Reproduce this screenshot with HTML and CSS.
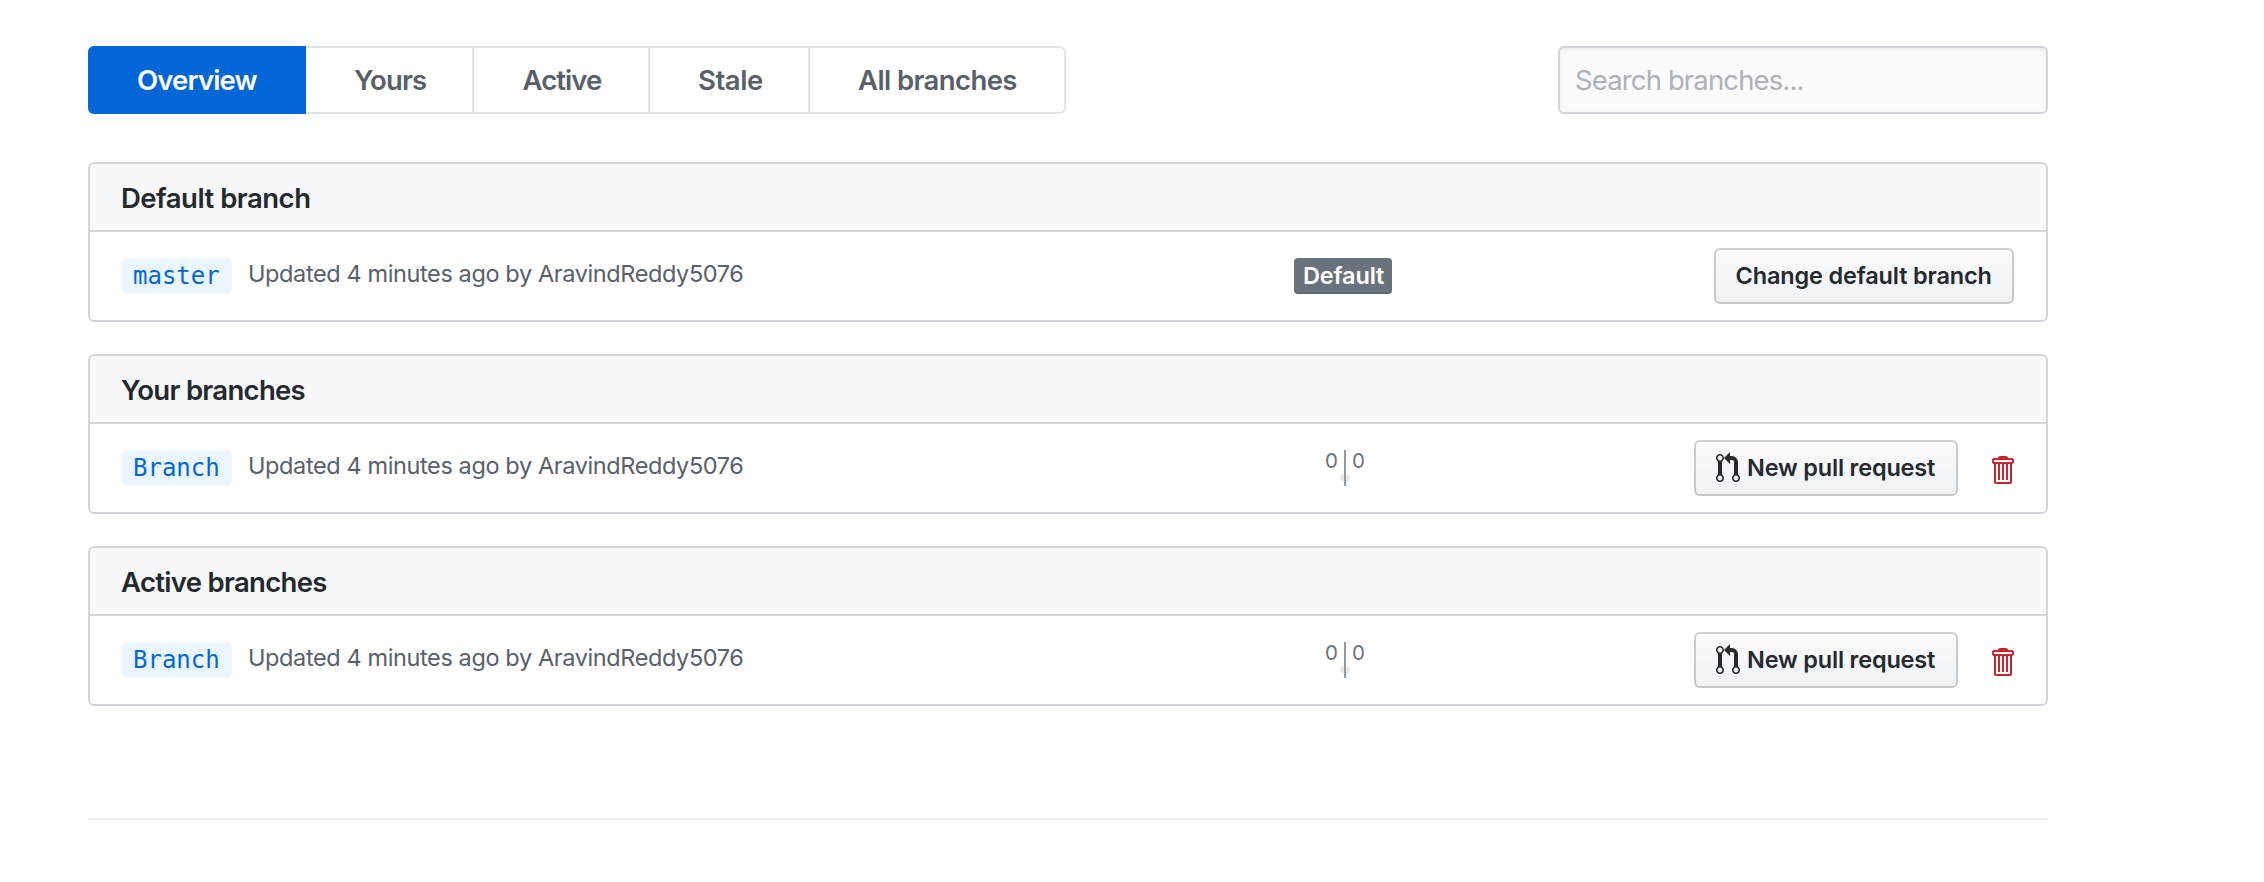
FILE: index.html
```
<!DOCTYPE html>
<html lang="en">
<head>
<meta charset="utf-8">
<title>Branches</title>
<link rel="stylesheet" href="styles.css">
</head>
<body>
<svg class="sprite" width="0" height="0" aria-hidden="true">
  <symbol id="pull-request" viewBox="0 0 12 16"><path fill-rule="evenodd" d="M11 11.28V5c-.03-.78-.34-1.47-.94-2.06C9.46 2.35 8.78 2.03 8 2H7V0L4 3l3 3V4h1c.27.02.48.11.69.31.21.2.3.42.31.69v6.28A1.993 1.993 0 0 0 10 15a1.993 1.993 0 0 0 1-3.72zm-1 2.92c-.66 0-1.2-.55-1.2-1.2 0-.65.55-1.2 1.2-1.2.65 0 1.2.55 1.2 1.2 0 .65-.55 1.2-1.2 1.2zM4 3c0-1.11-.89-2-2-2a1.993 1.993 0 0 0-1 3.72v6.56A1.993 1.993 0 0 0 2 15a1.993 1.993 0 0 0 1-3.72V4.72c.59-.34 1-.98 1-1.72zm-.8 10c0 .66-.55 1.2-1.2 1.2-.65 0-1.2-.55-1.2-1.2 0-.65.55-1.2 1.2-1.2.65 0 1.2.55 1.2 1.2zM2 4.2C1.34 4.2.8 3.65.8 3c0-.65.55-1.2 1.2-1.2.65 0 1.2.55 1.2 1.2 0 .65-.55 1.2-1.2 1.2z"/></symbol>
  <symbol id="trash" viewBox="0 0 12 16"><path fill-rule="evenodd" d="M11 2H9c0-.55-.45-1-1-1H5c-.55 0-1 .45-1 1H2c-.55 0-1 .45-1 1v1c0 .55.45 1 1 1v9c0 .55.45 1 1 1h7c.55 0 1-.45 1-1V5c.55 0 1-.45 1-1V3c0-.55-.45-1-1-1zm-1 12H3V5h1v8h1V5h1v8h1V5h1v8h1V5h1v9zm1-10H2V3h9v1z"/></symbol>
</svg>
<main class="container">
  <div class="subnav">
    <nav class="tabs">
      <a class="tab tab-overview selected">Overview</a>
      <a class="tab tab-yours">Yours</a>
      <a class="tab tab-active">Active</a>
      <a class="tab tab-stale">Stale</a>
      <a class="tab tab-all">All branches</a>
    </nav>
    <input class="search" type="text" placeholder="Search branches...">
  </div>

  <section class="box">
    <h2 class="box-header header-default">Default branch</h2>
    <div class="row">
      <div class="summary"><a class="branch-name">master</a><span class="updated">Updated 4 minutes ago by AravindReddy5076</span></div>
      <div class="status"><span class="label">Default</span></div>
      <div class="actions"><button class="btn btn-change">Change default branch</button></div>
    </div>
  </section>

  <section class="box">
    <h2 class="box-header">Your branches</h2>
    <div class="row">
      <div class="summary"><a class="branch-name">Branch</a><span class="updated">Updated 4 minutes ago by AravindReddy5076</span></div>
      <div class="status"><div class="divergence"><span>0</span><i class="meter"></i><span>0</span></div></div>
      <div class="actions"><button class="btn btn-pull"><svg class="icon-pull"><use href="#pull-request"/></svg>New pull request</button><a class="delete"><svg class="icon-trash"><use href="#trash"/></svg></a></div>
    </div>
  </section>

  <section class="box">
    <h2 class="box-header">Active branches</h2>
    <div class="row">
      <div class="summary"><a class="branch-name">Branch</a><span class="updated">Updated 4 minutes ago by AravindReddy5076</span></div>
      <div class="status"><div class="divergence"><span>0</span><i class="meter"></i><span>0</span></div></div>
      <div class="actions"><button class="btn btn-pull"><svg class="icon-pull"><use href="#pull-request"/></svg>New pull request</button><a class="delete"><svg class="icon-trash"><use href="#trash"/></svg></a></div>
    </div>
  </section>

  <hr class="rule">
</main>
</body>
</html>
```
FILE: styles.css
```
* { box-sizing: border-box; }
body { margin: 0; background: #fff; color: #24292e; font-family: Inter, "Liberation Sans", sans-serif; }
.sprite { position: absolute; }
.container { width: 1960px; margin-left: 88px; padding-top: 46px; }

.subnav { display: flex; justify-content: space-between; height: 68px; margin-bottom: 48px; }
.tabs { display: flex; }
.tab { display: flex; align-items: center; height: 68px; padding-left: 48px; border: 2px solid #e1e4e8; border-left: 0; color: #586069; font-size: 27.5px; font-weight: 600; white-space: nowrap; }
.tab-overview { width: 218px; padding-left: 49px; letter-spacing: -.87px; border-radius: 6px 0 0 6px; }
.tab-yours { width: 168px; letter-spacing: -.851px; }
.tab-active { width: 176px; padding-left: 48.5px; letter-spacing: -.95px; }
.tab-stale { width: 160px; letter-spacing: -.429px; }
.tab-all { width: 256px; letter-spacing: -.6px; border-radius: 0 6px 6px 0; }
.tab.selected { background: #0366d6; border-color: #0366d6; color: #fff; }

.search { width: 490px; height: 68px; padding: 0 15px; border: 2px solid #d1d5da; border-radius: 6px; background: #fafbfc; box-shadow: inset 0 2px 4px rgba(27,31,35,.075); font: 400 27.5px Inter, sans-serif; letter-spacing: -.87px; }
.search::placeholder { color: #abb1b8; opacity: 1; }

.box { height: 160px; margin-bottom: 32px; border: 2px solid #d1d5da; border-radius: 6px; overflow: hidden; }
.box-header { height: 68px; margin: 0; padding: 2px 0 0 31px; border-bottom: 2px solid #d1d5da; background: #f6f8fa; font-size: 27.5px; font-weight: 600; line-height: 64px; letter-spacing: -.69px; }
.header-default { letter-spacing: -.5px; }
.row { display: grid; grid-template-columns: 1100px 246px 546px; align-items: center; height: 88px; padding: 0 32px; }
.summary { display: flex; align-items: center; gap: 16px; }
.branch-name { width: 110px; height: 36px; padding-left: 11px; border-radius: 6px; background: #eaf5ff; color: #0366d6; font: 24px/36px "DejaVu Sans Mono", monospace; }
.updated { margin-bottom: 5px; color: #586069; font-size: 23.5px; line-height: 30px; letter-spacing: -.39px; white-space: nowrap; }

.status { display: flex; justify-content: center; }
.label { width: 98px; height: 36px; margin-right: 4px; padding-left: 9px; border-radius: 4px; background: #6a737d; box-shadow: inset 0 -2px 0 rgba(27,31,35,.12); color: #fff; font-size: 23.5px; font-weight: 600; line-height: 35px; letter-spacing: -.159px; }
.divergence { position: relative; display: flex; gap: 6px; height: 36px; color: #6a737d; font-size: 20.5px; line-height: 21px; }
.divergence::before { content: ""; position: absolute; left: 50%; top: 24px; width: 10px; height: 8px; margin-left: -5px; border-radius: 4px; background: #e9eaed; }
.meter { position: relative; width: 2px; height: 36px; background: #8f9ba3; }

.actions { display: flex; justify-content: flex-end; align-items: center; }
.btn { display: flex; align-items: center; height: 56px; padding: 0 0 2px; border: 2px solid rgba(27,31,35,.2); border-radius: 6px; background: linear-gradient(-180deg, #fafbfc 0%, #eff3f6 90%) -2px -2px / 110% 110%; color: #24292e; font: 600 23.5px Inter, sans-serif; white-space: nowrap; }
.btn-change { width: 300px; padding-left: 19.5px; letter-spacing: -.16px; }
.btn-pull { width: 264px; padding-left: 20px; letter-spacing: -.191px; }
.icon-pull { width: 24px; height: 32px; margin: 2px 7px 0 0; fill: #24292e; }
.delete { display: flex; width: 24px; height: 32px; margin: 4px 0 0 32px; }
.icon-trash { width: 24px; height: 32px; fill: #cb2431; }

.rule { height: 2px; margin: 112px 0 0; border: 0; background: #eaecef; }
```
